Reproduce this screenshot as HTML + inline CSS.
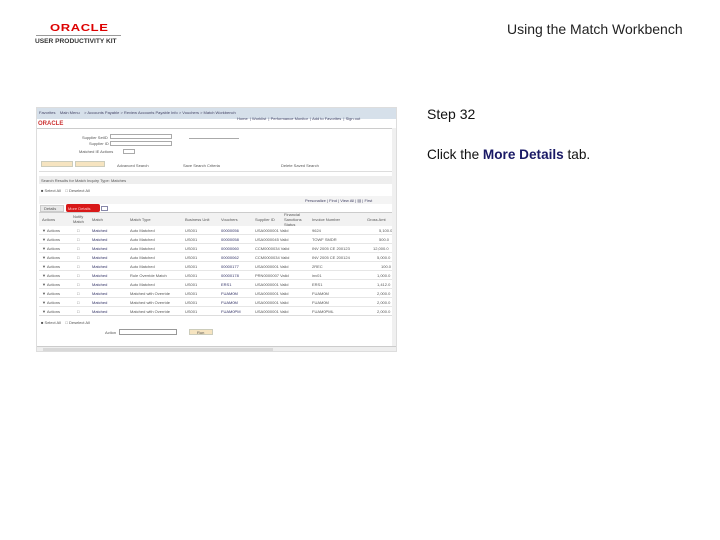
<!DOCTYPE html>
<html><head><meta charset="utf-8"><style>
*{margin:0;padding:0;box-sizing:border-box}
body{width:720px;height:540px;background:#fff;position:relative;overflow:hidden;font-family:"Liberation Sans",sans-serif}
.a{position:absolute;white-space:nowrap}
.t{position:absolute;white-space:nowrap;font-size:4px;color:#555;line-height:5px}
.b{color:#336}
</style></head><body>
<div class="a" style="left:50px;top:22px;font-size:13px;font-weight:bold;color:#d00;letter-spacing:0.6px;transform:scaleY(0.75);transform-origin:left top">ORACLE</div>
<div class="a" style="left:36px;top:35px;width:85px;border-top:1px solid #999"></div>
<div class="a" style="left:35px;top:38px;font-size:6.6px;font-weight:bold;color:#333">USER PRODUCTIVITY KIT</div>
<div class="a" style="left:507px;top:21px;font-size:14px;color:#222">Using the Match Workbench</div>
<div class="a" style="left:427px;top:106px;font-size:14px;color:#111">Step 32</div>
<div class="a" style="left:427px;top:147px;font-size:13.6px;color:#111">Click the <b style="color:#1a1a66">More Details</b> tab.</div>

<div class="a" style="left:36px;top:107px;width:361px;height:245px;background:#fff;border:1px solid #ddd;overflow:hidden">
<div class="a" style="left:0;top:0;width:361px;height:11px;background:#d6e0ea"></div>
<div class="t" style="left:2px;top:2px;color:#446">Favorites &nbsp;&nbsp; Main Menu &nbsp;&nbsp; &gt; Accounts Payable &gt; Review Accounts Payable Info &gt; Vouchers &gt; Match Workbench</div>
<div class="t" style="left:200px;top:8px;color:#446">Home &nbsp;| Worklist &nbsp;| Performance Monitor &nbsp;| Add to Favorites &nbsp;| Sign out</div>
<div class="a" style="left:1px;top:13px;font-size:6px;font-weight:bold;color:#c33">ORACLE</div>
<div class="a" style="left:0;top:20px;width:361px;height:1px;background:#ccc"></div>
<div class="t" style="left:45px;top:27px">Supplier SetID</div><div class="a" style="left:73px;top:26px;width:62px;height:5px;border:1px solid #aaa"></div>
<div class="a" style="left:152px;top:26px;width:50px;height:5px;border-bottom:1px solid #aaa"></div>
<div class="t" style="left:52px;top:33px">Supplier ID</div><div class="a" style="left:73px;top:33px;width:62px;height:5px;border:1px solid #aaa"></div>
<div class="t" style="left:42px;top:41px">Matched IE Actions</div><div class="a" style="left:86px;top:41px;width:12px;height:5px;border:1px solid #aaa"></div>
<div class="a" style="left:4px;top:53px;width:32px;height:6px;background:#f6e4c0;border:1px solid #ccb"></div>
<div class="a" style="left:38px;top:53px;width:30px;height:6px;background:#f6e4c0;border:1px solid #ccb"></div>
<div class="t" style="left:80px;top:55px">Advanced Search</div>
<div class="t" style="left:146px;top:55px">Save Search Criteria</div>
<div class="t" style="left:244px;top:55px">Delete Saved Search</div>
<div class="a" style="left:2px;top:63px;width:358px;height:1px;background:#ddd"></div>
<div class="a" style="left:2px;top:68px;width:357px;height:8px;background:#eee"></div>
<div class="t" style="left:4px;top:70px">Search Results for Match Inquiry Type: Matches</div>
<div class="t" style="left:4px;top:80px">&#9632; Select All &nbsp;&nbsp; &#9633; Deselect All</div>
<div class="a" style="left:2px;top:88px;width:357px;height:8px;background:#f4f4f4"></div>
<div class="t" style="left:268px;top:90px;color:#446">Personalize | Find | View All | &#9636; | First</div>
<div class="a" style="left:3px;top:97px;width:24px;height:7px;background:#e8e8e8;border:1px solid #ccc"></div>
<div class="t" style="left:7px;top:98px">Details</div>
<div class="a" style="left:29px;top:96px;width:34px;height:8px;background:#d81818;border-radius:2px"></div>
<div class="t" style="left:31px;top:98px;color:#fcc">More Details</div>
<div class="a" style="left:64px;top:98px;width:7px;height:5px;border:1px solid #88a"></div>
<div class="a" style="left:2px;top:104px;width:357px;height:14px;background:#f2f2f2;border-top:1px solid #ccc"></div>
<div class="t" style="left:5px;top:109px">Actions</div><div class="t" style="left:36px;top:106px">Notify<br>Match</div>
<div class="t" style="left:55px;top:109px">Match</div><div class="t" style="left:93px;top:109px">Match Type</div>
<div class="t" style="left:148px;top:109px">Business Unit</div><div class="t" style="left:184px;top:109px">Vouchers</div>
<div class="t" style="left:218px;top:109px">Supplier ID</div><div class="t" style="left:247px;top:104px">Financial<br>Sanctions<br>Status</div>
<div class="t" style="left:275px;top:109px">Invoice Number</div><div class="t" style="left:330px;top:109px">Gross Amt</div>

<div style="position:absolute;left:2px;top:118px;width:357px">
<div style="position:relative;height:9px;border-bottom:1px solid #e6e6e6"><span class="t" style="left:3px;top:2px">&#9660; Actions</span><span class="t" style="left:38px;top:2px">&#9633;</span><span class="t b" style="left:53px;top:2px">Matched</span><span class="t" style="left:91px;top:2px">Auto Matched</span><span class="t" style="left:146px;top:2px">US001</span><span class="t b" style="left:182px;top:2px">00000056</span><span class="t" style="left:216px;top:2px">USA0000001 Valid</span><span class="t" style="left:273px;top:2px">9624</span><span class="t" style="left:340px;top:2px">5,100.0</span></div>
<div style="position:relative;height:9px;border-bottom:1px solid #e6e6e6"><span class="t" style="left:3px;top:2px">&#9660; Actions</span><span class="t" style="left:38px;top:2px">&#9633;</span><span class="t b" style="left:53px;top:2px">Matched</span><span class="t" style="left:91px;top:2px">Auto Matched</span><span class="t" style="left:146px;top:2px">US001</span><span class="t b" style="left:182px;top:2px">00000058</span><span class="t" style="left:216px;top:2px">USA0000045 Valid</span><span class="t" style="left:273px;top:2px">TOWF SMDR</span><span class="t" style="left:340px;top:2px">500.0</span></div>
<div style="position:relative;height:9px;border-bottom:1px solid #e6e6e6"><span class="t" style="left:3px;top:2px">&#9660; Actions</span><span class="t" style="left:38px;top:2px">&#9633;</span><span class="t b" style="left:53px;top:2px">Matched</span><span class="t" style="left:91px;top:2px">Auto Matched</span><span class="t" style="left:146px;top:2px">US001</span><span class="t b" style="left:182px;top:2px">00000060</span><span class="t" style="left:216px;top:2px">CCM0000034 Valid</span><span class="t" style="left:273px;top:2px">INV 2005 CE 200123</span><span class="t" style="left:334px;top:2px">12,000.0</span></div>
<div style="position:relative;height:9px;border-bottom:1px solid #e6e6e6"><span class="t" style="left:3px;top:2px">&#9660; Actions</span><span class="t" style="left:38px;top:2px">&#9633;</span><span class="t b" style="left:53px;top:2px">Matched</span><span class="t" style="left:91px;top:2px">Auto Matched</span><span class="t" style="left:146px;top:2px">US001</span><span class="t b" style="left:182px;top:2px">00000062</span><span class="t" style="left:216px;top:2px">CCM0000034 Valid</span><span class="t" style="left:273px;top:2px">INV 2005 CE 200124</span><span class="t" style="left:338px;top:2px">5,000.0</span></div>
<div style="position:relative;height:9px;border-bottom:1px solid #e6e6e6"><span class="t" style="left:3px;top:2px">&#9660; Actions</span><span class="t" style="left:38px;top:2px">&#9633;</span><span class="t b" style="left:53px;top:2px">Matched</span><span class="t" style="left:91px;top:2px">Auto Matched</span><span class="t" style="left:146px;top:2px">US001</span><span class="t b" style="left:182px;top:2px">00000177</span><span class="t" style="left:216px;top:2px">USA0000001 Valid</span><span class="t" style="left:273px;top:2px">2REC</span><span class="t" style="left:342px;top:2px">100.0</span></div>
<div style="position:relative;height:9px;border-bottom:1px solid #e6e6e6"><span class="t" style="left:3px;top:2px">&#9660; Actions</span><span class="t" style="left:38px;top:2px">&#9633;</span><span class="t b" style="left:53px;top:2px">Matched</span><span class="t" style="left:91px;top:2px">Rule Override Match</span><span class="t" style="left:146px;top:2px">US001</span><span class="t b" style="left:182px;top:2px">00000178</span><span class="t" style="left:216px;top:2px">PRN0000007 Valid</span><span class="t" style="left:273px;top:2px">inv01</span><span class="t" style="left:338px;top:2px">1,000.0</span></div>
<div style="position:relative;height:9px;border-bottom:1px solid #e6e6e6"><span class="t" style="left:3px;top:2px">&#9660; Actions</span><span class="t" style="left:38px;top:2px">&#9633;</span><span class="t b" style="left:53px;top:2px">Matched</span><span class="t" style="left:91px;top:2px">Auto Matched</span><span class="t" style="left:146px;top:2px">US001</span><span class="t b" style="left:182px;top:2px">ERS1</span><span class="t" style="left:216px;top:2px">USA0000001 Valid</span><span class="t" style="left:273px;top:2px">ERS1</span><span class="t" style="left:338px;top:2px">1,412.0</span></div>
<div style="position:relative;height:9px;border-bottom:1px solid #e6e6e6"><span class="t" style="left:3px;top:2px">&#9660; Actions</span><span class="t" style="left:38px;top:2px">&#9633;</span><span class="t b" style="left:53px;top:2px">Matched</span><span class="t" style="left:91px;top:2px">Matched with Override</span><span class="t" style="left:146px;top:2px">US001</span><span class="t b" style="left:182px;top:2px">FUAM0M</span><span class="t" style="left:216px;top:2px">USA0000001 Valid</span><span class="t" style="left:273px;top:2px">FUAM0M</span><span class="t" style="left:338px;top:2px">2,000.0</span></div>
<div style="position:relative;height:9px;border-bottom:1px solid #e6e6e6"><span class="t" style="left:3px;top:2px">&#9660; Actions</span><span class="t" style="left:38px;top:2px">&#9633;</span><span class="t b" style="left:53px;top:2px">Matched</span><span class="t" style="left:91px;top:2px">Matched with Override</span><span class="t" style="left:146px;top:2px">US001</span><span class="t b" style="left:182px;top:2px">FUAM0M</span><span class="t" style="left:216px;top:2px">USA0000001 Valid</span><span class="t" style="left:273px;top:2px">FUAM0M</span><span class="t" style="left:338px;top:2px">2,000.0</span></div>
<div style="position:relative;height:9px;border-bottom:1px solid #ddd"><span class="t" style="left:3px;top:2px">&#9660; Actions</span><span class="t" style="left:38px;top:2px">&#9633;</span><span class="t b" style="left:53px;top:2px">Matched</span><span class="t" style="left:91px;top:2px">Matched with Override</span><span class="t" style="left:146px;top:2px">US001</span><span class="t b" style="left:182px;top:2px">FUAM0PM</span><span class="t" style="left:216px;top:2px">USA0000001 Valid</span><span class="t" style="left:273px;top:2px">FUAM0PML</span><span class="t" style="left:338px;top:2px">2,000.0</span></div>
</div>
<div class="t" style="left:4px;top:212px">&#9632; Select All &nbsp;&nbsp; &#9633; Deselect All</div>
<div class="t" style="left:68px;top:222px">Action</div>
<div class="a" style="left:82px;top:221px;width:58px;height:6px;border:1px solid #999"></div>
<div class="a" style="left:152px;top:221px;width:24px;height:6px;background:#f6e4c0;border:1px solid #ccb"></div>
<div class="t" style="left:160px;top:222px">Run</div>
<div class="a" style="left:0;top:238px;width:361px;height:7px;background:#eee;border-top:1px solid #ccc"></div>
<div class="a" style="left:6px;top:240px;width:230px;height:4px;background:#d8d8d8"></div>
<div class="a" style="left:355px;top:20px;width:6px;height:218px;background:#f0f0f0"></div>
</div>
</body></html>
